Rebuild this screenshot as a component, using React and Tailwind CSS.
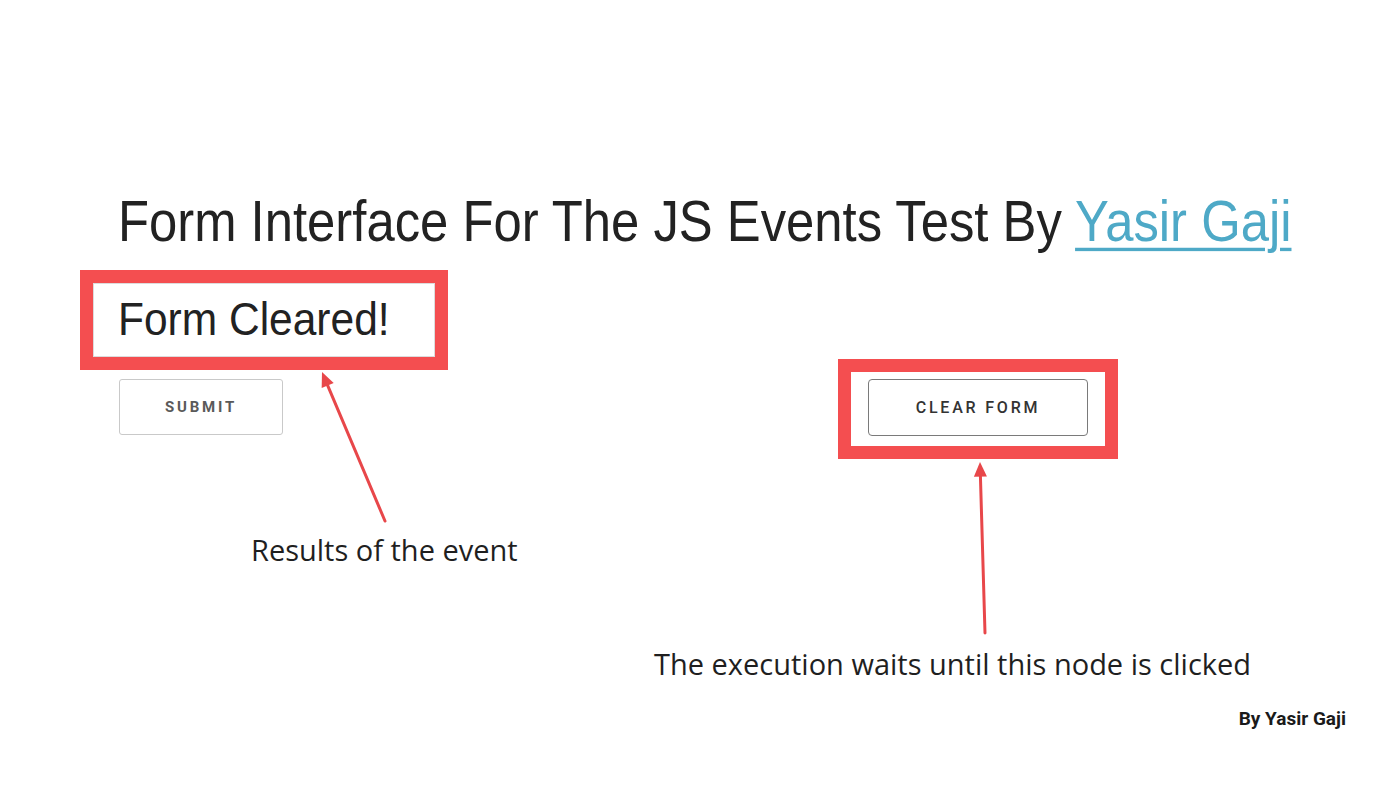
const Arrow = function ({ x1, y1, x2, y2 }) {
    // tip at (x2, y2)
    const angle = Math.atan2(y2 - y1, x2 - x1);
    const len = 16;
    const spread = 0.42;
    const ax = x2 - len * Math.cos(angle - spread);
    const ay = y2 - len * Math.sin(angle - spread);
    const bx = x2 - len * Math.cos(angle + spread);
    const by = y2 - len * Math.sin(angle + spread);
    const mx = x2 - (len - 4) * Math.cos(angle);
    const my = y2 - (len - 4) * Math.sin(angle);
    return (
        <g>
            <line x1={x1} y1={y1} x2={mx} y2={my} stroke="#e8474a" strokeWidth="3" strokeLinecap="round" />
            <polygon points={`${x2},${y2} ${ax},${ay} ${bx},${by}`} fill="#e8474a" />
        </g>
    );
}

const App = function () {
    return (
        <div className="relative w-[1400px] h-[788px] overflow-hidden bg-white text-[#222]">
            <div className="pt-[192px] pl-[118px]">
                <h1 className="text-[50.8px] leading-[60px] whitespace-nowrap scale-y-[1.12] origin-center font-['Liberation_Sans',Arial,sans-serif]">
                    Form Interface For The JS Events Test By{" "}
                    <a href="#" className="text-[#4ea9c7] underline decoration-[3px] underline-offset-[6px]">Yasir Gaji</a>
                </h1>
            </div>

            <div className="flex mt-[18px]">
                <div className="ml-[80px] w-[368px] flex flex-col">
                    <div className="h-[100px] border-[13px] border-[#f44e50] bg-white">
                        <div className="h-full border border-[#dcdcdc] pl-[24px] text-[42.5px] leading-[72px] font-['Liberation_Sans',Arial,sans-serif]">
                            <span className="inline-block scale-y-[1.08]">Form Cleared!</span>
                        </div>
                    </div>
                    <button className="ml-[39px] mt-[9px] w-[164px] h-[56px] rounded-[3px] border border-[#c9c9c9] bg-white text-[15px] font-bold tracking-[2.8px] text-[#5a5a5a] font-['Roboto',Arial,sans-serif]">
                        SUBMIT
                    </button>
                </div>
                <div className="ml-[390px] mt-[89px] w-[280px] h-[100px] border-[13px] border-[#f44e50] bg-white pt-[7px] pl-[17px]">
                    <button className="w-[220px] h-[57px] rounded-[4px] border border-[#7a7a7a] bg-white text-[16px] font-medium tracking-[2.8px] text-[#333] font-['Roboto',Arial,sans-serif]">
                        CLEAR FORM
                    </button>
                </div>
            </div>

            <p className="mt-[73px] pl-[251px] text-[29px] leading-[36px] text-[#1f1f1f] font-['Open_Sans','Noto_Sans',sans-serif]">
                Results of the event
            </p>
            <p className="mt-[78px] pl-[654px] text-[29px] leading-[36px] text-[#1f1f1f] font-['Open_Sans','Noto_Sans',sans-serif]">
                The execution waits until this node is clicked
            </p>
            <p className="mt-[25px] pr-[54px] text-right text-[19px] leading-[24px] font-bold text-[#1a1a1a] font-['Roboto',Arial,sans-serif]">
                By Yasir Gaji
            </p>

            <svg className="absolute inset-0 pointer-events-none" width="1400" height="788">
                <Arrow x1={385} y1={521} x2={322} y2={372} />
                <Arrow x1={985} y1={633} x2={980} y2={462} />
            </svg>
        </div>
    );
}

export default App;
